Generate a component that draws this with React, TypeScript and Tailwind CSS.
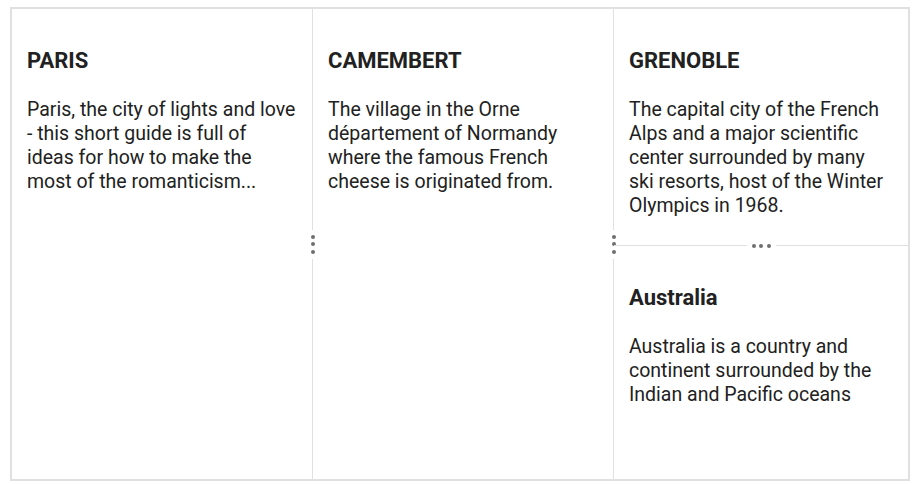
import React from "react";

interface PaneProps {
    title: string;
    text: string;
    pr?: string;
}

const Pane: React.FC<PaneProps> = ({ title, text, pr = "pr-[15px]" }) => {
    return (
        <div className={`pt-[38px] pl-[15px] ${pr}`}>
            <h3 className="text-[22px] leading-[28px] font-bold text-[#212121]">{title}</h3>
            <p className="mt-[23px] text-[19.5px] leading-[24px] text-[#212121]">{text}</p>
        </div>
    );
};

const Dot = () => <div className="w-1 h-1 rounded-full bg-[#6f6f6f] shrink-0"></div>;

const VSplit = () => (
    <div className="w-px shrink-0 flex flex-col items-center">
        <div className="flex-1 w-px bg-[#e0e0e0]"></div>
        <div className="flex flex-col gap-[3.5px] py-[5px]">
            <Dot />
            <Dot />
            <Dot />
        </div>
        <div className="flex-1 w-px bg-[#e0e0e0]"></div>
    </div>
);

const HSplit = () => (
    <div className="h-px shrink-0 flex items-center">
        <div className="flex-1 h-px bg-[#e0e0e0]"></div>
        <div className="flex gap-[3.5px] px-[5px]">
            <Dot />
            <Dot />
            <Dot />
        </div>
        <div className="flex-1 h-px bg-[#e0e0e0]"></div>
    </div>
);

const App: React.FC = () => {
    return (
        <div className="pl-[10px] pt-[7px] bg-white" style={{ fontFamily: "Roboto, 'Noto Sans', sans-serif" }}>
            <div className="w-[900px] h-[474px] border-2 border-[#e0e0e0] flex">
                <div className="w-[300px] shrink-0">
                    <Pane title="PARIS" text="Paris, the city of lights and love - this short guide is full of ideas for how to make the most of the romanticism..." />
                </div>
                <VSplit />
                <div className="w-[300px] shrink-0">
                    <Pane title="CAMEMBERT" text="The village in the Orne département of Normandy where the famous French cheese is originated from." />
                </div>
                <VSplit />
                <div className="flex-1 flex flex-col">
                    <div className="h-[236px] shrink-0">
                        <Pane title="GRENOBLE" pr="pr-[20px]" text="The capital city of the French Alps and a major scientific center surrounded by many ski resorts, host of the Winter Olympics in 1968." />
                    </div>
                    <HSplit />
                    <div className="flex-1">
                        <Pane title="Australia" pr="pr-[20px]" text="Australia is a country and continent surrounded by the Indian and Pacific oceans" />
                    </div>
                </div>
            </div>
        </div>
    );
};

export default App;
